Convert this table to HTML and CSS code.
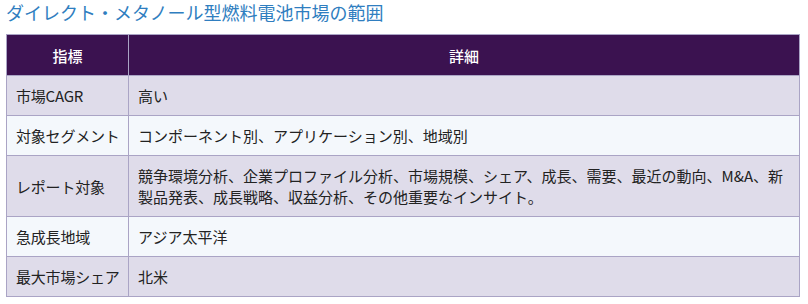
FILE: index.html
```html
<!DOCTYPE html>
<html lang="ja">
<head>
<meta charset="utf-8">
<title>ダイレクト・メタノール型燃料電池市場の範囲</title>
<link rel="stylesheet" href="styles.css">
</head>
<body>
<main class="page">
  <h2 class="title">ダイレクト・メタノール型燃料電池市場の範囲</h2>
  <table class="scope">
    <colgroup><col class="c1"><col></colgroup>
    <thead>
      <tr><th>指標</th><th>詳細</th></tr>
    </thead>
    <tbody>
      <tr><td class="key">市場CAGR</td><td>高い</td></tr>
      <tr><td class="key">対象セグメント</td><td>コンポーネント別、アプリケーション別、地域別</td></tr>
      <tr><td class="key">レポート対象</td><td>競争環境分析、企業プロファイル分析、市場規模、シェア、成長、需要、最近の動向、M&amp;A、新製品発表、成長戦略、収益分析、その他重要なインサイト。</td></tr>
      <tr><td class="key">急成長地域</td><td>アジア太平洋</td></tr>
      <tr><td class="key">最大市場シェア</td><td>北米</td></tr>
    </tbody>
  </table>
</main>
</body>
</html>
```
FILE: styles.css
```css
html, body {
  margin: 0;
  padding: 0;
  background: #ffffff;
}
body {
  font-family: "Noto Sans CJK JP", "Noto Sans", sans-serif;
  color: #222222;
}
.page {
  padding: 0 8px 0 6px;
}
.title {
  margin: 0 0 10px 0;
  font-size: 18px;
  line-height: 24px;
  font-weight: normal;
  color: #2f7ec0;
}
.scope {
  width: 794px;
  border-collapse: collapse;
  table-layout: fixed;
  font-size: 15px;
  line-height: 21px;
}
.scope col.c1 {
  width: 122px;
}
.scope th,
.scope td {
  border: 1px solid #aaa4c5;
  padding: 9px 9px;
  text-align: left;
  vertical-align: middle;
}
.scope td.key {
  white-space: nowrap;
  padding-right: 0;
  letter-spacing: -0.2px;
}
.scope th {
  background: #3b1250;
  color: #ffffff;
  font-weight: 500;
  text-align: center;
  padding: 10px 9px 9px;
}
.scope tbody tr:nth-child(odd) td {
  background: #dfdcea;
}
.scope tbody tr:nth-child(even) td {
  background: #f4f8fc;
}
```
